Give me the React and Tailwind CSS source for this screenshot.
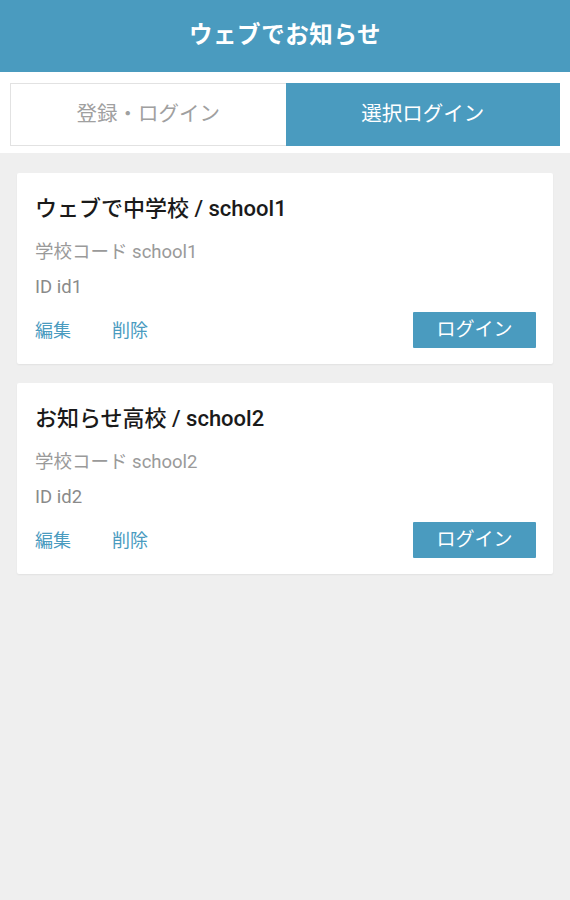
import React from "react";

const schools = [
  { name: "ウェブで中学校", code: "school1", id: "id1" },
  { name: "お知らせ高校", code: "school2", id: "id2" },
];

const SchoolCard = ({ school }) => (
  <div className="bg-white rounded-[2px] shadow-[0_1px_2px_rgba(0,0,0,0.06)] pl-[18px] pr-[17px] pt-[20px] pb-[16px]">
    <h2 className="text-[22px] leading-[32px] font-medium text-[#1a1a1a]">
      {school.name} / {school.code}
    </h2>
    <p className="mt-[15px] text-[18.5px] leading-[24px] text-[#9a9a9a]">
      学校コード {school.code}
    </p>
    <p className="mt-[11px] text-[18.5px] leading-[24px] text-[#8a8a8a]">
      ID {school.id}
    </p>
    <div className="mt-[13px] flex items-center justify-between">
      <div className="flex gap-[41px] text-[18px] text-[#4a9bbf]">
        <span>編集</span>
        <span>削除</span>
      </div>
      <button className="w-[123px] h-[36px] bg-[#4a9bbf] text-white text-[19px] rounded-[1px]">
        ログイン
      </button>
    </div>
  </div>
);

export default function App() {
  return (
    <div
      className="min-h-[900px] bg-[#efefef]"
      style={{ fontFamily: "Roboto, 'Noto Sans CJK JP', sans-serif" }}
    >
      {/* Header */}
      <header className="h-[72px] bg-[#4a9bbf] flex items-center justify-center">
        <h1 className="text-white text-[23.5px] font-bold tracking-wide">ウェブでお知らせ</h1>
      </header>

      {/* Tabs */}
      <div className="bg-white px-[10px] pt-[11px] pb-[7px]">
        <div className="flex h-[63px]">
          <div className="flex-1 flex items-center justify-center border border-[#e2e2e2] border-r-0 text-[#a0a0a0] text-[20.5px]">
            登録・ログイン
          </div>
          <div className="flex-1 flex items-center justify-center bg-[#4a9bbf] text-white text-[20.5px]">
            選択ログイン
          </div>
        </div>
      </div>

      {/* Cards */}
      <div className="px-[17px] pt-[20px] flex flex-col gap-[19px]">
        {schools.map((s) => (
          <SchoolCard key={s.code} school={s} />
        ))}
      </div>
    </div>
  );
}
